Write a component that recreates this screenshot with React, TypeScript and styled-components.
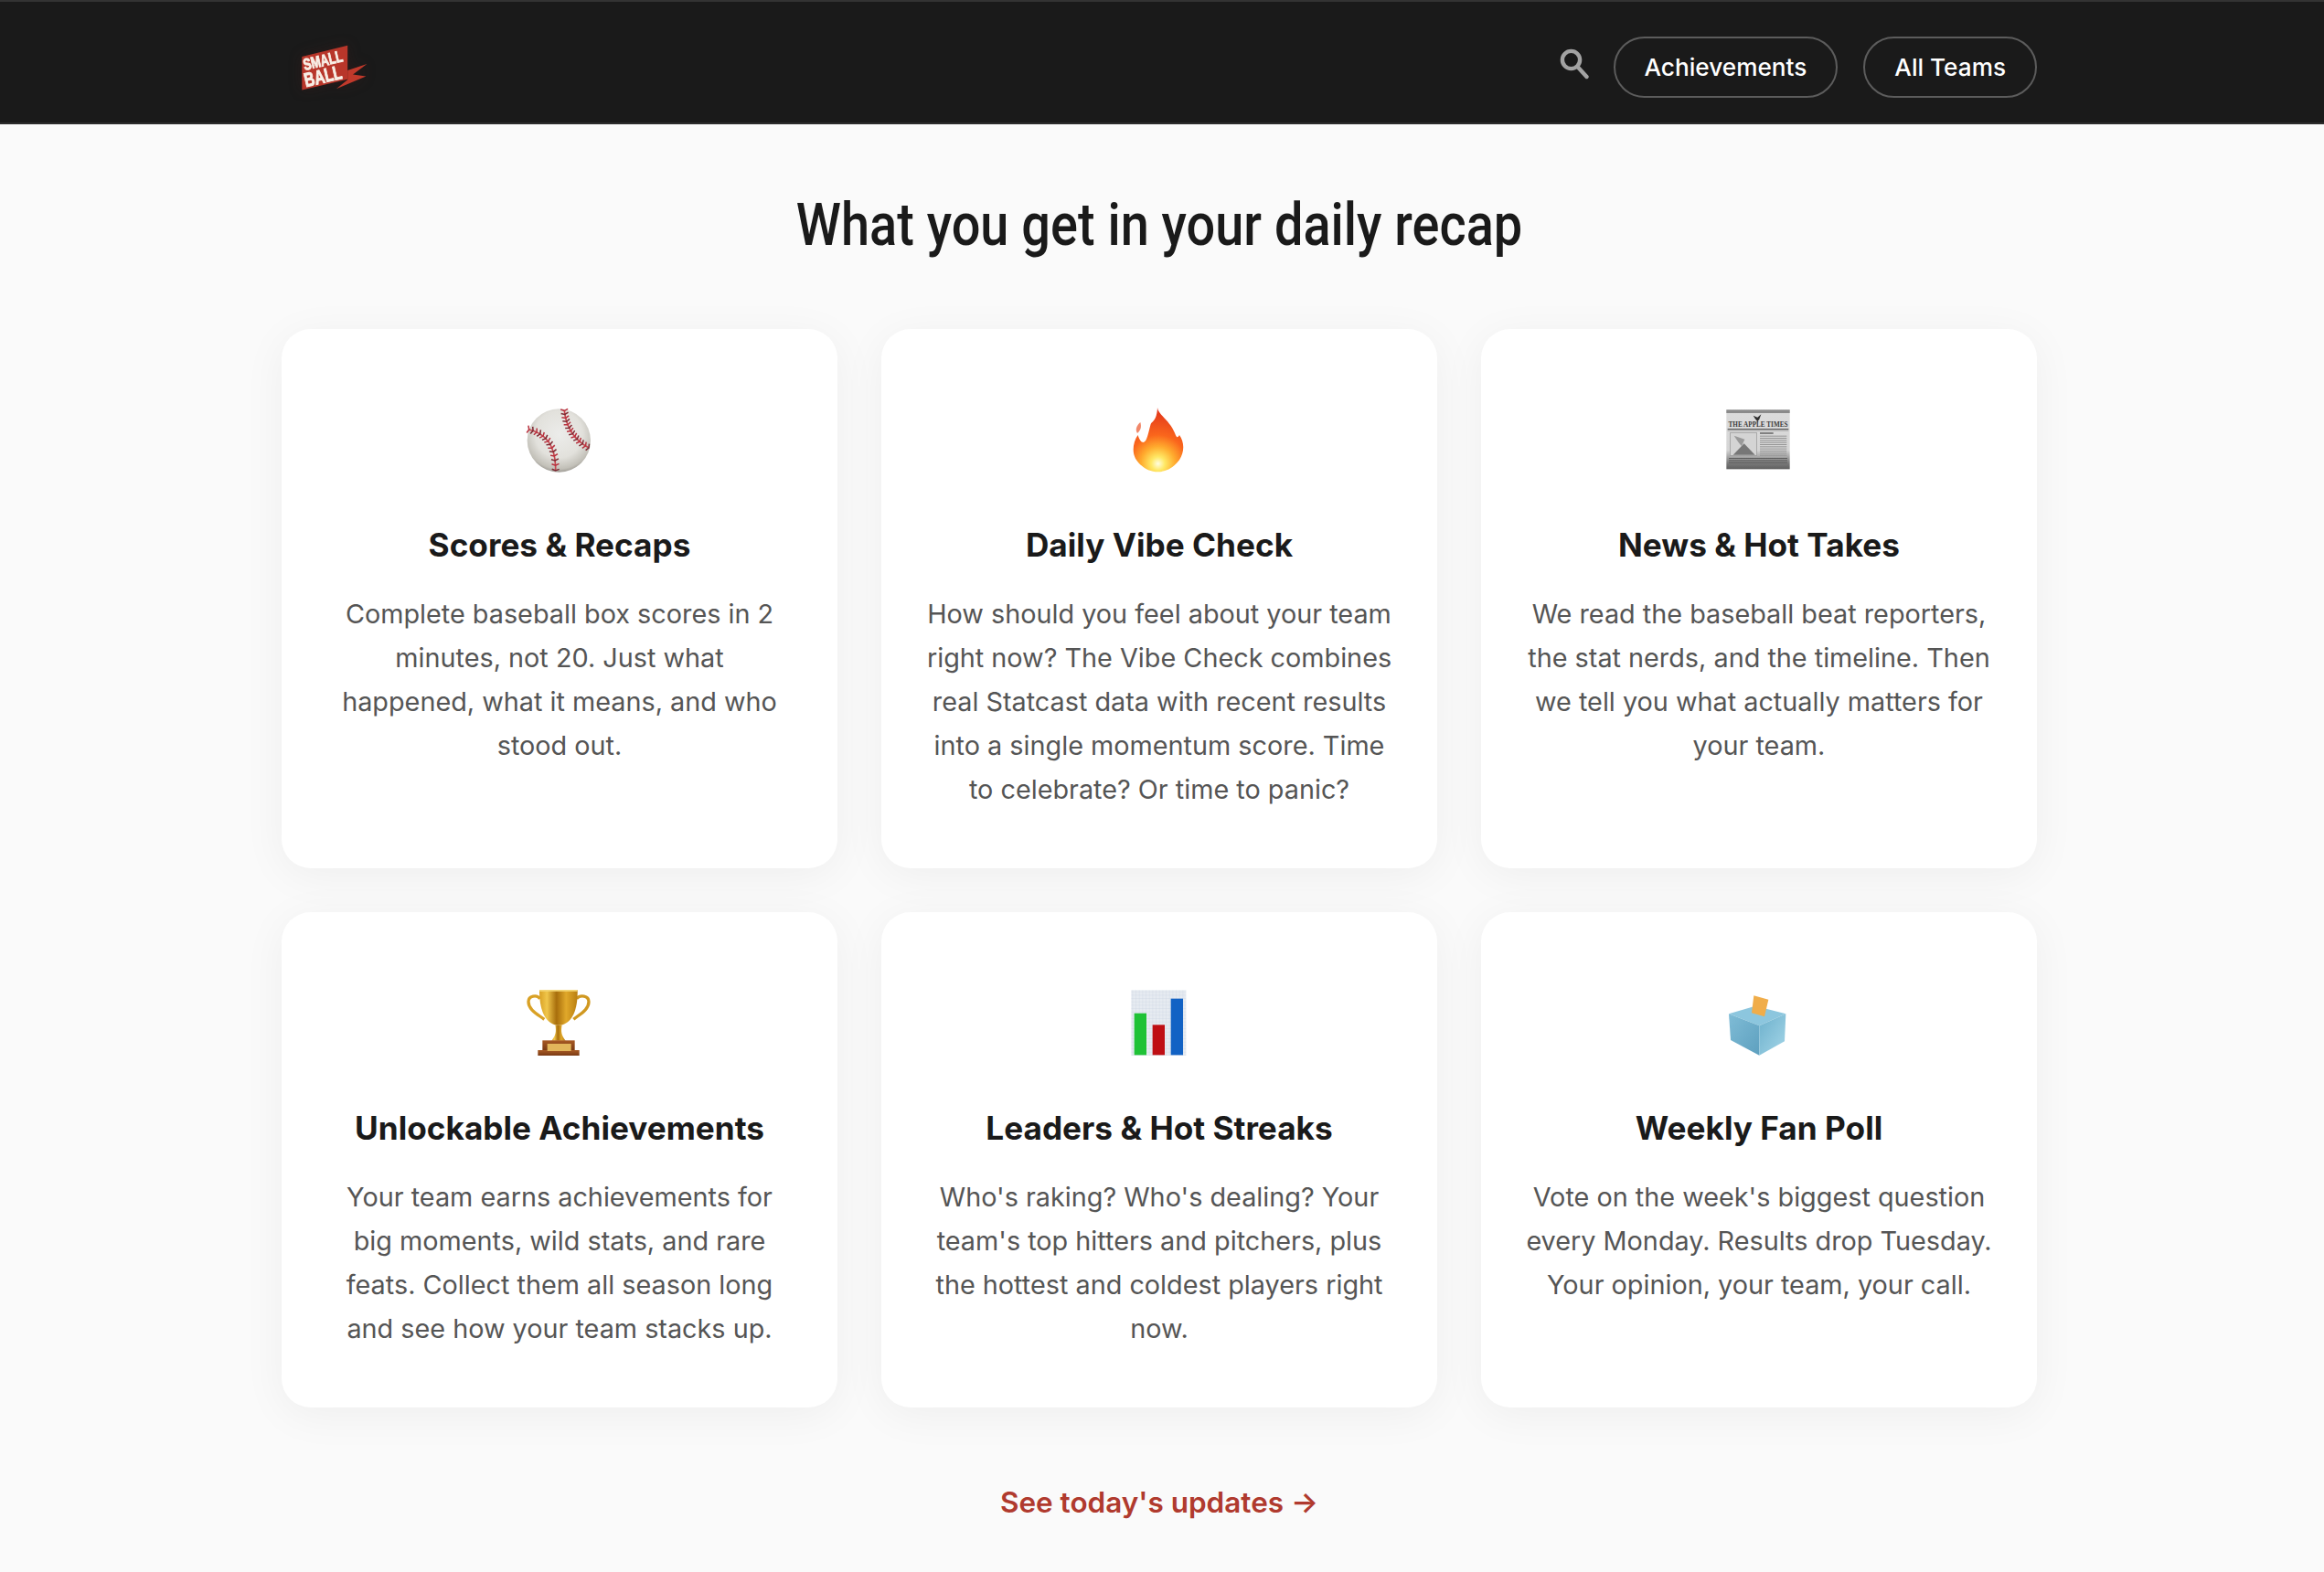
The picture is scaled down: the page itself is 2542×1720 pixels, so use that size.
import React from 'react';
import styled, { createGlobalStyle } from 'styled-components';

const Global = createGlobalStyle`
  html, body { margin: 0; padding: 0; background: #fafafa; }
  body { font-family: Inter, "Liberation Sans", sans-serif; overflow: hidden; height: 1720px; }
`;

const Page = styled.div`
  width: 2536px;
  height: 1720px;
  display: flex;
  flex-direction: column;
  background: #fafafa;
`;
const Header = styled.header`
  width: 2542px;
  height: 136px;
  box-sizing: border-box;
  background: #1a1a1a;
  border-top: 2px solid #333;
  border-bottom: 2px solid #2c2c2c;
  padding-right: 6px;
  display: flex;
  justify-content: center;
  flex: none;
`;
const HeaderInner = styled.div`
  width: 1920px;
  box-sizing: border-box;
  padding-top: 11px;
  display: flex;
  align-items: center;
  justify-content: space-between;
`;
const LogoMark = styled.svg`
  width: 75px;
  height: 52px;
  margin-left: 20px;
  display: block;
  filter: drop-shadow(0 0 7px rgba(70, 30, 25, 0.35));
`;
const Nav = styled.nav`
  display: flex;
  align-items: center;
  gap: 28px;
`;
const SearchIcon = styled.svg`
  display: block;
  width: 32px;
  height: 34px;
  margin-bottom: 7px;
  margin-right: -1px;
`;
const Pill = styled.a`
  height: 67px;
  box-sizing: border-box;
  padding: 0 32px;
  display: flex;
  align-items: center;
  border: 2px solid #5c5c5c;
  border-radius: 34px;
  color: #fff;
  font-size: 26.2px;
  font-weight: 500;
`;
const Main = styled.main`
  width: 1920px;
  margin: 0 auto;
  padding-top: 73px;
`;
const Title = styled.h1`
  margin: 0 0 75px;
  text-align: center;
  font-family: Roboto, "Liberation Sans", sans-serif;
  font-weight: 500;
  font-size: 64px;
  line-height: 76px;
  color: #1a1a1a;
  transform: scaleX(0.873);
`;
const Grid = styled.div`
  display: grid;
  grid-template-columns: repeat(3, 608px);
  gap: 48px;
`;
const Card = styled.article`
  background: #fff;
  border-radius: 32px;
  padding: 64px 49px 62px;
  box-shadow: 0 8px 48px rgba(0, 0, 0, 0.05);
  text-align: center;
`;
const Emoji = styled.svg`
  display: block;
  width: 96px;
  height: 96px;
  margin: 0 auto 51px;
`;
const CardTitle = styled.h2`
  margin: 0 -20px 27px;
  font-size: 35.2px;
  line-height: 50px;
  font-weight: 700;
  color: #1a1a1a;
`;
const CardText = styled.p`
  margin: 0;
  font-size: 28.8px;
  line-height: 48px;
  color: #555;
`;
const Cta = styled.a`
  display: block;
  margin-top: 80px;
  text-align: center;
  font-size: 31.5px;
  line-height: 48px;
  font-weight: 600;
  color: #b03a2e;
`;

const seam = (x0: number, y0: number, cx: number, cy: number, x1: number, y1: number, n: number) => {
  const out: React.ReactNode[] = [];
  for (let i = 0; i <= n; i++) {
    const t = i / n;
    const x = (1 - t) * (1 - t) * x0 + 2 * t * (1 - t) * cx + t * t * x1;
    const y = (1 - t) * (1 - t) * y0 + 2 * t * (1 - t) * cy + t * t * y1;
    let dx = 2 * (1 - t) * (cx - x0) + 2 * t * (x1 - cx);
    let dy = 2 * (1 - t) * (cy - y0) + 2 * t * (y1 - cy);
    const l = Math.hypot(dx, dy);
    dx /= l; dy /= l;
    const a = 12;
    out.push(
      <path
        key={i}
        d={`M${x - dy * a - dx * 5} ${y + dx * a - dy * 5}L${x} ${y}L${x + dy * a - dx * 5} ${y - dx * a - dy * 5}`}
        fill="none"
        stroke={i % 2 ? '#7d2a33' : '#b8323f'}
        strokeWidth="4.5"
      />
    );
  }
  return out;
};

const Baseball = () => (
  <Emoji viewBox="72 12 288 288">
    <defs>
      <radialGradient id="ball" cx="50%" cy="40%" r="62%">
        <stop offset="0" stopColor="#ececea" />
        <stop offset=".6" stopColor="#e2e1dc" />
        <stop offset=".88" stopColor="#c2c0b8" />
        <stop offset="1" stopColor="#94918b" />
      </radialGradient>
    </defs>
    <circle cx="214" cy="186" r="104" fill="url(#ball)" />
    <path d="M116 150Q205 170 203 285" fill="none" stroke="#c7474f" strokeWidth="5" />
    <path d="M232 88Q240 170 312 210" fill="none" stroke="#c7474f" strokeWidth="5" />
    {seam(116, 150, 205, 170, 203, 285, 13)}
    {seam(232, 88, 240, 170, 312, 210, 13)}
  </Emoji>
);

const Flame = () => (
  <Emoji viewBox="30 12 288 288">
    <defs>
      <radialGradient id="fire" gradientUnits="userSpaceOnUse" cx="170" cy="262" r="175">
        <stop offset="0" stopColor="#fffde0" />
        <stop offset=".13" stopColor="#ffe864" />
        <stop offset=".32" stopColor="#ffab2e" />
        <stop offset=".54" stopColor="#fa661c" />
        <stop offset="1" stopColor="#e2361a" />
      </radialGradient>
    </defs>
    <path
      fill="url(#fire)"
      d="M168 78C170 100 205 118 222 155C230 172 232 182 240 168C256 190 258 222 240 250C222 275 195 289 170 289C140 289 112 272 96 245C84 224 88 190 104 168C108 182 114 192 122 192C134 190 138 160 146 132C152 122 166 120 168 78Z"
    />
    <path fill="#ee6a45" opacity=".8" d="M112 126C116 140 114 152 102 162C94 150 100 136 112 126Z" />
  </Emoji>
);

const Newspaper = () => (
  <Emoji viewBox="33 12 288 288">
    <defs>
      <linearGradient id="paper" x1="0" y1="0" x2="0" y2="1">
        <stop offset="0" stopColor="#dcdcdc" />
        <stop offset=".68" stopColor="#d5d5d5" />
        <stop offset=".9" stopColor="#7a7a7a" />
        <stop offset="1" stopColor="#5e5e5e" />
      </linearGradient>
    </defs>
    <rect x="70" y="85" width="208" height="195" fill="url(#paper)" />
    <rect x="70" y="85" width="208" height="11" fill="#8b8b8b" />
    <path d="M158 104L172 110L184 100L178 116L172 124L164 114Z" fill="#2f2f2f" />
    <text x="174" y="142" textAnchor="middle" fontFamily="'Liberation Serif', serif" fontWeight="700" fontSize="23" fill="#3a3a3a" textLength="195" lengthAdjust="spacingAndGlyphs">THE APPLE TIMES</text>
    <rect x="74" y="147" width="200" height="3" fill="#555" />
    <rect x="74" y="152" width="200" height="2" fill="#777" />
    <rect x="82" y="161" width="88" height="74" fill="#d4d4d4" stroke="#949494" strokeWidth="2" />
    <path d="M92 233L128 196L164 233Z" fill="#777" />
    <path d="M95 170L130 182L120 205L108 190Z" fill="#999" />
    <g fill="#949494">
      <rect x="180" y="160" width="44" height="4" fill="#555" />
      {[170, 177, 184, 191, 198, 205, 212, 219, 226, 233].map((y) => (
        <rect key={y} x="180" y={y} width="88" height="3" />
      ))}
      {[243, 250, 257].map((y) => (
        <rect key={y} x="78" y={y} width="192" height="3" fill="#5c5c5c" />
      ))}
    </g>
  </Emoji>
);

const Trophy = () => (
  <Emoji viewBox="42 6 288 288">
    <defs>
      <linearGradient id="gold" x1="0" y1="0" x2="1" y2="0">
        <stop offset="0" stopColor="#d9a125" />
        <stop offset=".2" stopColor="#f0c64a" />
        <stop offset=".45" stopColor="#a86e0c" />
        <stop offset=".7" stopColor="#e0a82a" />
        <stop offset="1" stopColor="#b97e10" />
      </linearGradient>
      <linearGradient id="wood" x1="0" y1="0" x2="0" y2="1">
        <stop offset="0" stopColor="#a85a24" />
        <stop offset="1" stopColor="#7a3a14" />
      </linearGradient>
    </defs>
    <path d="M122 98C112 84 84 88 84 108C84 134 112 148 136 166" fill="none" stroke="#d9a125" strokeWidth="10" />
    <path d="M242 98C254 84 282 88 282 108C282 134 254 148 232 166" fill="none" stroke="#d09820" strokeWidth="10" />
    <path d="M120 70H245C246 120 236 170 196 184H170C130 170 120 120 120 70Z" fill="url(#gold)" />
    <rect x="120" y="69" width="125" height="5" fill="#f4d675" rx="2" />
    <path d="M172 184H194C190 205 192 220 206 236H160C174 220 176 205 172 184Z" fill="url(#gold)" />
    <rect x="130" y="235" width="106" height="32" fill="url(#wood)" />
    <rect x="115" y="267" width="136" height="18" fill="url(#wood)" />
    <rect x="146" y="246" width="78" height="24" fill="#e2b65b" />
  </Emoji>
);

const BarChart = () => (
  <Emoji viewBox="30 6 288 288">
    <defs>
      <pattern id="grid" width="11" height="11" patternUnits="userSpaceOnUse">
        <rect width="11" height="11" fill="#e6ebf1" />
        <path d="M11 0V11M0 11H11" stroke="#c4cfdb" strokeWidth="1.5" />
      </pattern>
    </defs>
    <rect x="82" y="70" width="180" height="215" fill="url(#grid)" />
    <rect x="92" y="146" width="40" height="137" fill="#1fc236" />
    <rect x="152" y="184" width="40" height="99" fill="#bf0f14" />
    <rect x="212" y="98" width="40" height="185" fill="#1262c4" />
  </Emoji>
);

const BallotBox = () => (
  <Emoji viewBox="33 6 288 288">
    <defs>
      <linearGradient id="boxL" x1="0" y1="0" x2="1" y2="1">
        <stop offset="0" stopColor="#7fbcd6" />
        <stop offset="1" stopColor="#5ea0bf" />
      </linearGradient>
      <linearGradient id="boxR" x1="0" y1="0" x2="1" y2="1">
        <stop offset="0" stopColor="#6cb0cc" />
        <stop offset="1" stopColor="#a5d6e8" />
      </linearGradient>
    </defs>
    <path d="M78 148L165 122L265 148L178 187Z" fill="#8cc6de" />
    <path d="M160 88L208 101L195 157L153 145Z" fill="#f0ad4a" />
    <path d="M78 148L178 187V284L84 234Z" fill="url(#boxL)" />
    <path d="M178 187L265 148L261 238L178 284Z" fill="url(#boxR)" />
  </Emoji>
);

const Logo = () => (
  <LogoMark viewBox="140 138 230 158" aria-label="Small Ball">
    <path d="M300 226L365 205L318 240L362 246L262 288L300 258Z" fill="#c0392b" />
    <path d="M147 180L300 143V256L147 292Z" fill="#b8362a" />
    <g fill="#f8efe6" stroke="#f8efe6" strokeWidth="3" fontFamily="'Liberation Sans', sans-serif" fontWeight="700">
      <text transform="rotate(-13 156 226)" x="156" y="226" fontSize="54" textLength="134" lengthAdjust="spacingAndGlyphs">SMALL</text>
      <text transform="rotate(-13 160 282)" x="160" y="282" fontSize="66" textLength="128" lengthAdjust="spacingAndGlyphs">BALL</text>
    </g>
  </LogoMark>
);

const features = [
  { icon: <Baseball />, title: 'Scores & Recaps', text: 'Complete baseball box scores in 2 minutes, not 20. Just what happened, what it means, and who stood out.' },
  { icon: <Flame />, title: 'Daily Vibe Check', text: 'How should you feel about your team right now? The Vibe Check combines real Statcast data with recent results into a single momentum score. Time to celebrate? Or time to panic?' },
  { icon: <Newspaper />, title: 'News & Hot Takes', text: 'We read the baseball beat reporters, the stat nerds, and the timeline. Then we tell you what actually matters for your team.' },
  { icon: <Trophy />, title: 'Unlockable Achievements', text: 'Your team earns achievements for big moments, wild stats, and rare feats. Collect them all season long and see how your team stacks up.' },
  { icon: <BarChart />, title: 'Leaders & Hot Streaks', text: "Who's raking? Who's dealing? Your team's top hitters and pitchers, plus the hottest and coldest players right now." },
  { icon: <BallotBox />, title: 'Weekly Fan Poll', text: "Vote on the week's biggest question every Monday. Results drop Tuesday. Your opinion, your team, your call." },
];

export default function App() {
  return (
    <Page>
      <Global />
      <Header>
        <HeaderInner>
          <Logo />
          <Nav>
            <SearchIcon viewBox="0 0 32 34" aria-label="Search">
              <circle cx="12.5" cy="12.5" r="9.6" fill="none" stroke="#a3a3a3" strokeWidth="4.4" />
              <path d="M19.5 20L29.5 31" fill="none" stroke="#a3a3a3" strokeWidth="4.4" strokeLinecap="round" />
            </SearchIcon>
            <Pill>Achievements</Pill>
            <Pill>All Teams</Pill>
          </Nav>
        </HeaderInner>
      </Header>
      <Main>
        <Title>What you get in your daily recap</Title>
        <Grid>
          {features.map((f) => (
            <Card key={f.title}>
              {f.icon}
              <CardTitle>{f.title}</CardTitle>
              <CardText>{f.text}</CardText>
            </Card>
          ))}
        </Grid>
        <Cta>See today's updates →</Cta>
      </Main>
    </Page>
  );
}
